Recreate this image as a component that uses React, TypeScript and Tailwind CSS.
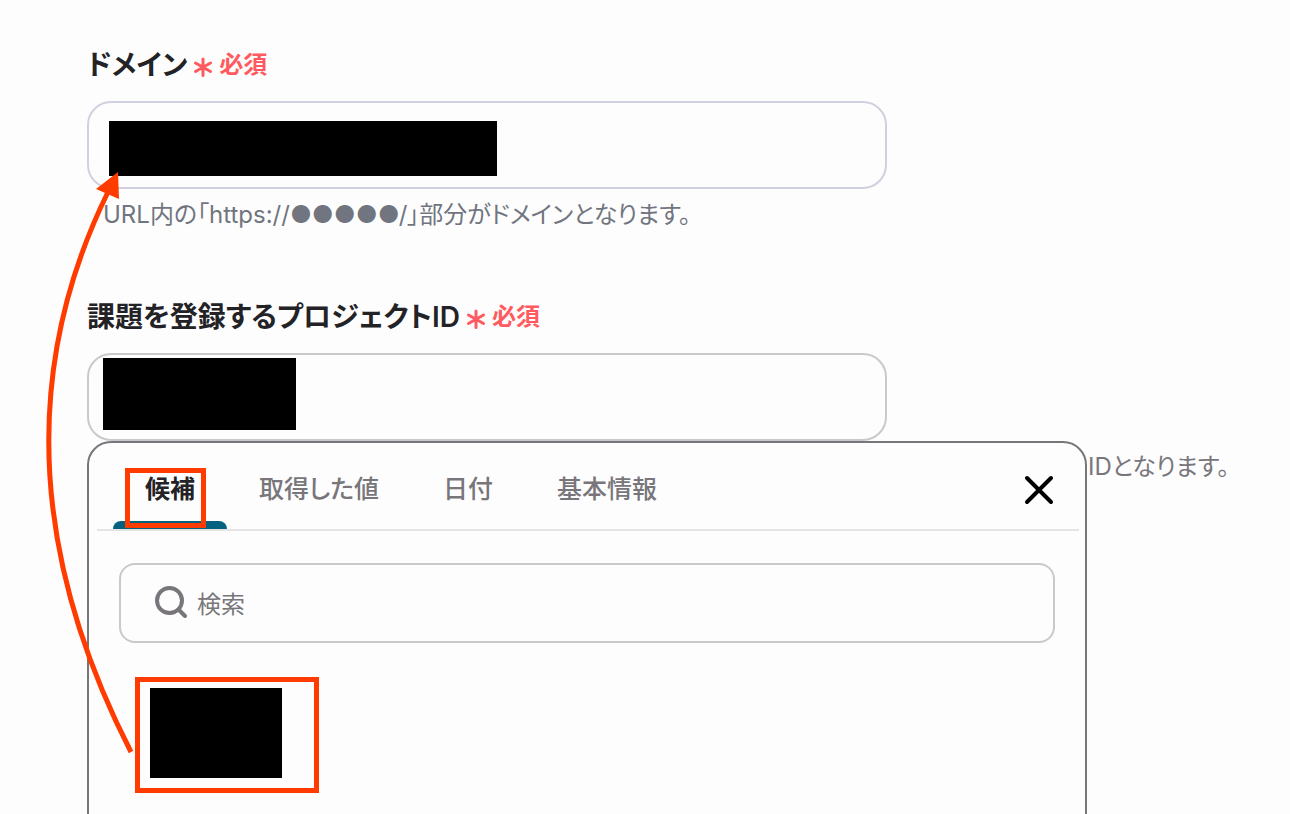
import { useState } from "react";

const TABS = ["候補", "取得した値", "日付", "基本情報"];

function RequiredMark() {
  return (
    <span className="flex items-center gap-1.5 text-2xl font-semibold text-[#ff5a5f]">
      <svg width="20" height="20" viewBox="0 0 20 20" fill="none" className="mt-1" aria-hidden="true">
        <path
          d="M10 2v16.5M2.5 6l15 8.5M17.5 6l-15 8.5"
          stroke="currentColor"
          strokeWidth="3"
          strokeLinecap="round"
        />
      </svg>
      必須
    </span>
  );
}

function FieldLabel({ id, text }: { id: string; text: string }) {
  return (
    <label htmlFor={id} className="flex h-10 items-center gap-1.5 text-[28px] font-semibold text-[#232226]">
      {text}
      <RequiredMark />
    </label>
  );
}

function SuggestPanel() {
  const [active, setActive] = useState(TABS[0]);

  return (
    <div className="absolute top-full left-0 h-[480px] w-[1000px] rounded-t-3xl border-2 border-[#78767b] bg-[#fdfdfd]">
      <div className="mr-1.5 ml-2 flex h-[88px] items-stretch border-b-2 border-[#e4e4e4] pr-6 pl-4">
        <div role="tablist" className="relative flex flex-1">
          {TABS.map((tab) => (
            <button
              key={tab}
              type="button"
              role="tab"
              aria-selected={tab === active}
              onClick={() => setActive(tab)}
              className={
                tab === active
                  ? "flex flex-col text-[25px] font-semibold text-[#232226]"
                  : "flex flex-col text-[25px] font-medium text-[#78767b]"
              }
            >
              <span className="flex flex-1 items-center px-8 pt-4">{tab}</span>
              <span
                className={
                  tab === active ? "h-2 w-full rounded-t-lg bg-[#04617f]" : "h-2 w-full"
                }
              />
            </button>
          ))}
          <span className="pointer-events-none absolute top-[25px] left-3 h-[60px] w-[81px] border-[5px] border-[#ff3b00]" />
        </div>
        <button type="button" aria-label="閉じる" className="pt-2 text-black">
          <svg width="32" height="32" viewBox="0 0 32 32" fill="none">
            <path d="M4 4l24 24M28 4L4 28" stroke="currentColor" strokeWidth="4" strokeLinecap="round" />
          </svg>
        </button>
      </div>
      <div className="px-[30px] pt-8">
        <label className="flex h-20 items-center gap-2.5 rounded-2xl border-2 border-[#c9c8cb] px-8 text-[#78767b]">
          <svg width="34" height="34" viewBox="0 0 34 34" fill="none" aria-hidden="true">
            <circle cx="16.5" cy="14.5" r="12.5" stroke="currentColor" strokeWidth="4" />
            <path d="M25.5 23.5l6.5 6.5" stroke="currentColor" strokeWidth="4" strokeLinecap="round" />
          </svg>
          <input
            type="text"
            placeholder="検索"
            aria-label="検索"
            className="min-w-0 flex-1 bg-transparent pt-1 text-2xl outline-none placeholder:text-[#78767b]"
          />
        </label>
        <button
          type="button"
          aria-label="候補の値"
          className="mt-[34px] ml-4 flex h-[116px] w-[184px] border-[5px] border-[#ff3b00] px-[10px] py-[6px]"
        >
          <span className="h-[90px] w-[132px] bg-black" />
        </button>
      </div>
    </div>
  );
}

function Arrow() {
  return (
    <svg
      width="140"
      height="760"
      viewBox="0 0 140 760"
      fill="none"
      className="pointer-events-none absolute top-0 left-0"
      aria-hidden="true"
    >
      <path d="M131 752Q-21 455 108 192" stroke="#ff3b00" strokeWidth="5" />
      <path d="M118 172L96 189L119 199Z" fill="#ff3b00" />
    </svg>
  );
}

export default function App() {
  return (
    <main className="relative h-screen overflow-hidden bg-[#fdfdfd] font-['Inter','Noto_Sans_CJK_JP',sans-serif] [font-feature-settings:'palt']">
      <form className="pt-[45px] pl-[87px]">
        <FieldLabel id="domain" text="ドメイン" />
        <div className="mt-4 flex h-[88px] w-full max-w-[800px] rounded-3xl border-2 border-[#cfd2de] px-5 pt-[18px]">
          <span className="h-[55px] w-[388px] bg-black" />
          <input id="domain" type="text" className="h-[55px] min-w-0 flex-1 bg-transparent text-2xl outline-none" />
        </div>
        <p className="mt-2 pl-4 text-2xl leading-9 text-[#71757f]">
          URL内の「https://●●●●●/」部分がドメインとなります。
        </p>

        <div className="mt-16">
          <FieldLabel id="project-id" text="課題を登録するプロジェクトID" />
          <div className="relative mt-4 w-full max-w-[800px]">
            <div className="flex h-[88px] rounded-3xl border-2 border-[#c9c8cb] px-[14px] pt-[3px]">
              <span className="h-[72px] w-[193px] bg-black" />
              <input
                id="project-id"
                type="text"
                className="h-[72px] min-w-0 flex-1 bg-transparent text-2xl outline-none"
              />
            </div>
            <SuggestPanel />
          </div>
          <p className="mt-2 pl-[1001px] text-2xl leading-9 whitespace-nowrap text-[#78767b]">
            IDとなります。
          </p>
        </div>
      </form>
      <Arrow />
    </main>
  );
}
